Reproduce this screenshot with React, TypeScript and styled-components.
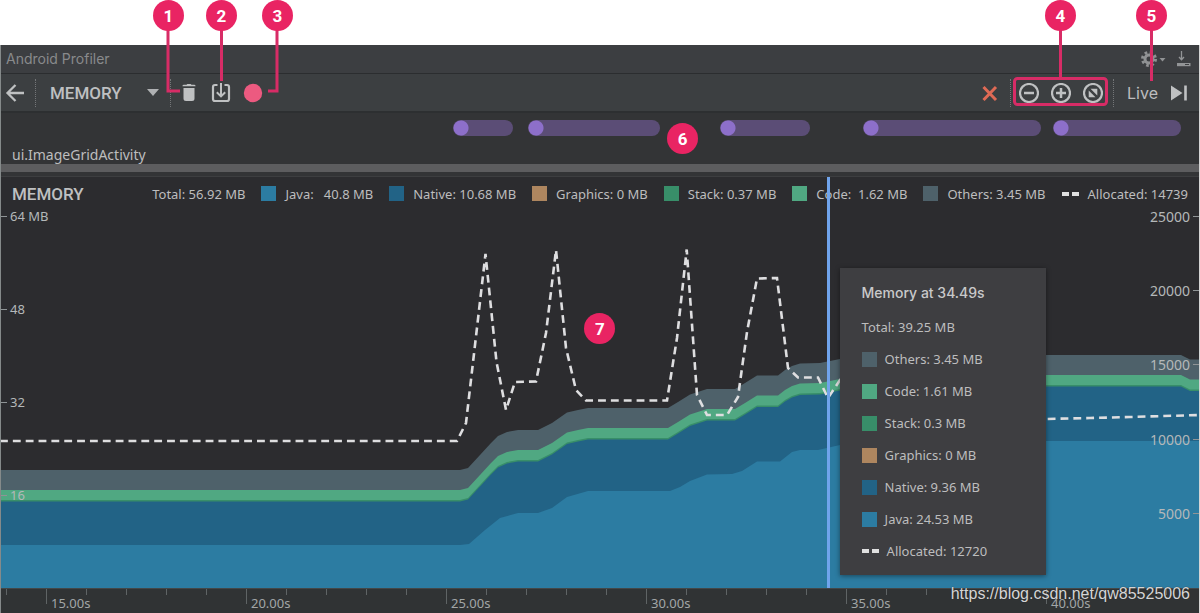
import React from "react";
import styled, { createGlobalStyle } from "styled-components";

const color = {
  java: "#2c7ca2",
  native: "#226386",
  graphics: "#ae865f",
  stack: "#388e69",
  code: "#50a882",
  others: "#4e616a",
  accent: "#e92463",
  connector: "#d72c66",
  text: "#bdbdbe",
  icon: "#bfc1c2",
};

const sans = `"Noto Sans", "Open Sans", sans-serif`;
const ui = `Inter, Roboto, sans-serif`;

const GlobalStyle = createGlobalStyle`
  * { box-sizing: border-box; }
  body { margin: 0; background: #fff; }
  button, select { font: inherit; color: inherit; border: 0; padding: 0; background: none; cursor: pointer; }
  ul { list-style: none; margin: 0; padding: 0; }
  h1, h2, h3, p { margin: 0; font-weight: inherit; }
`;

const Page = styled.div`
  position: relative;
  min-height: 100vh;
  display: flex;
  flex-direction: column;
  padding-top: 45px;
  overflow: hidden;
  font-family: ${sans};
  font-size: 13px;
  color: ${color.text};
`;

const Panel = styled.main`
  flex: 1;
  display: flex;
  flex-direction: column;
  background: #333436;
  border-left: 1px solid #858a8a;
  border-right: 1px solid #d5d5d5;
`;

const TitleBar = styled.header`
  display: flex;
  align-items: center;
  justify-content: space-between;
  height: 29px;
  padding: 0 8px 0 5px;
  background: #3c3e41;
  border-bottom: 1px solid #2b2d2f;
`;

const Title = styled.h1`
  font: 400 14px/20px ${ui};
  color: #898a8c;
`;

const TitleTools = styled.div`
  display: flex;
  align-items: center;
  gap: 11px;
`;

const Toolbar = styled.div`
  display: flex;
  align-items: center;
  justify-content: space-between;
  height: 39px;
  padding: 0 10px 0 4px;
  background: #3c3f41;
  border-bottom: 2px solid #2d2f31;
`;

const ToolGroup = styled.div`
  display: flex;
  align-items: center;
`;

const ButtonRow = styled.div`
  display: flex;
  gap: 12px;
`;

const ToolButton = styled.button`
  display: flex;
  align-items: center;
  height: 20px;
`;

const Separator = styled.i<{ $after: number }>`
  height: 28px;
  border-left: 1px dotted #747678;
  margin: 0 ${(p) => p.$after}px 0 10px;
`;

const SelectBox = styled.label`
  display: grid;
  align-items: center;
  width: 110px;
  > * { grid-area: 1 / 1; }
  > svg { justify-self: end; pointer-events: none; }
`;

const Select = styled.select`
  appearance: none;
  width: 100%;
  font: 500 17px/24px Roboto, sans-serif;
  color: #bfc0c1;
  outline: none;
`;

const LiveButton = styled.button`
  display: flex;
  align-items: center;
  gap: 11px;
  font: 400 16px/20px ${ui};
`;

const Events = styled.section`
  height: 59px;
  padding-top: 7px;
  border-bottom: 8px solid #5d5d5f;
  display: flex;
  flex-direction: column;
  justify-content: space-between;
`;

const EventTrack = styled.div`
  display: grid;
  grid-template-columns: 452fr 60fr 15fr 132fr 60fr 90fr 53fr 178fr 12fr 128fr 18fr;
`;

const EventBar = styled.span<{ $column: number }>`
  grid-column: ${(p) => p.$column};
  grid-row: 1;
  height: 16px;
  border-radius: 8px;
  background: radial-gradient(circle at 8px 8px, #8d6fca 7px, #5b4d76 8px);
`;

const Activity = styled.p`
  padding-left: 11px;
  font-size: 14px;
  line-height: 18px;
`;

const Memory = styled.section`
  position: relative;
  flex: 1;
  display: flex;
  flex-direction: column;
  margin-top: 4px;
  border-top: 1px solid #3d3e40;
  background: #2c2c2f;
`;

const MemoryHeader = styled.div`
  display: flex;
  align-items: center;
  justify-content: space-between;
  height: 39px;
  padding: 0 11px 6px 11px;
`;

const MemoryTitle = styled.h2`
  font: 500 17px/24px Roboto, sans-serif;
  color: #bfc0c1;
`;

const Legend = styled.ul`
  display: flex;
  gap: 16px;
`;

const LegendItem = styled.li`
  display: flex;
  align-items: center;
  gap: 9px;
  line-height: 20px;
  white-space: pre;
`;

const Swatch = styled.i<{ $color: string }>`
  width: 15px;
  height: 15px;
  background: ${(p) => p.$color};
`;

const DashSwatch = styled.i`
  width: 17px;
  height: 4px;
  background: linear-gradient(90deg, #e0e0e0 7px, transparent 7px, transparent 10px, #e0e0e0 10px);
`;

const Plot = styled.div`
  position: relative;
  flex: 1;
  min-height: 372px;
  display: grid;
`;

const Graph = styled.svg`
  display: block;
  position: absolute;
  inset: 0;
  width: 100%;
  height: 100%;
`;

const Scale = styled.ul<{ $rows: number; $right?: boolean }>`
  position: absolute;
  top: 0;
  bottom: 0;
  ${(p) => (p.$right ? "right: 0;" : "left: 0;")}
  display: grid;
  grid-template-rows: repeat(${(p) => p.$rows}, 1fr);
`;

const Mark = styled.li<{ $right?: boolean }>`
  display: flex;
  align-items: center;
  flex-direction: ${(p) => (p.$right ? "row-reverse" : "row")};
  gap: 3px;
  height: 0;
  font-size: ${(p) => (p.$right ? 14 : 13)}px;
  color: #b4b8b9;
  &::before {
    content: "";
    width: 6px;
    height: 1px;
    background: #8f9496;
  }
`;

const Cursor = styled.div`
  position: absolute;
  left: 69%;
  top: 0;
  bottom: 0;
  width: 3px;
  margin-left: -1px;
  background: #70a4ec;
`;

const Tooltip = styled.div`
  position: absolute;
  left: 70%;
  top: 91px;
  width: 206px;
  padding: 9px 22px 8px;
  background: #3e3e41;
  box-shadow: 0 1px 5px rgba(0, 0, 0, 0.45);
`;

const TooltipTitle = styled.h3`
  margin-bottom: 2px;
  font: 500 14px/32px ${ui};
  color: #c9c9ca;
`;

const TooltipRow = styled.li`
  display: flex;
  align-items: center;
  gap: 8px;
  height: 32px;
`;

const TimeAxis = styled.footer`
  position: relative;
  display: grid;
  grid-template-columns: 46fr 200fr 200fr 200fr 200fr 200fr 152fr;
  height: 25px;
  background: #303334;
  border-top: 1px solid #434748;
`;

const TimeLabel = styled.span<{ $column: number }>`
  grid-column: ${(p) => p.$column};
  padding: 5px 0 0 4px;
  line-height: 18px;
  color: #a2a6a7;
`;

const Badge = styled.span`
  position: absolute;
  display: grid;
  place-items: center;
  width: 31px;
  height: 31px;
  border-radius: 50%;
  background: ${color.accent};
  color: #fff;
  font: 700 17px/20px Roboto, sans-serif;
  z-index: 2;
`;

const LeftBadge = styled(Badge)<{ $x: number }>`
  top: 0;
  left: ${(p) => p.$x}px;
`;

const RightBadge = styled(Badge)<{ $x: number }>`
  top: 0;
  right: ${(p) => p.$x}px;
`;

const EventsBadge = styled(Badge)`
  top: 123px;
  left: 55.6%;
`;

const GraphBadge = styled(Badge)`
  top: 313px;
  left: 48.7%;
`;

const Connectors = styled.svg<{ $right?: boolean }>`
  position: absolute;
  top: 0;
  ${(p) => (p.$right ? "right: 0;" : "left: 0;")}
  pointer-events: none;
  z-index: 1;
`;

const Watermark = styled.a`
  position: absolute;
  right: 10px;
  bottom: 9px;
  font: 400 16px/20px "Liberation Sans", Arial, sans-serif;
  color: #d4d5d6;
  text-decoration: none;
  text-shadow: 0 0 1px #222;
`;

type Point = [number, number];

const othersTop: Point[] = [
  [0, 470], [460, 470], [468, 468], [480, 455], [491, 443], [498, 436], [507, 432], [518, 430],
  [538, 430], [552, 423], [567, 412.5], [578, 410], [588, 408], [668, 408], [678, 402], [690, 394.5],
  [707, 389], [735, 389], [745, 383], [757, 375.5], [778, 375.5], [785, 370], [792, 366],
  [800, 363.5], [820, 363], [840, 359], [860, 355], [1181, 355], [1190, 359.5], [1200, 359.5],
];

const javaTop: Point[] = [
  [0, 545], [460, 545], [469, 544], [485, 530], [500, 518], [518, 513], [538, 513], [552, 508],
  [567, 497], [588, 491], [670, 491], [680, 487], [690, 481], [707, 474.5], [732, 474], [742, 471],
  [757, 461.5], [780, 461.5], [792, 452], [800, 450], [818, 450], [840, 445], [860, 441], [1200, 441],
];

const allocated: Point[] = [
  [0, 441], [457, 441], [466, 423], [485.5, 254], [496.5, 362], [506, 410], [515, 382], [536, 381.5],
  [546, 333], [556, 250], [566, 348], [576, 390], [586, 400.5], [667, 400.5], [677, 338],
  [686.7, 249.5], [697, 395], [707, 415], [727, 415], [738, 397], [747, 332], [757, 278.5],
  [777, 278], [788, 368], [798, 377.5], [818, 377.5], [828, 398], [840, 380], [1046, 419],
  [1090, 418], [1130, 417], [1200, 415],
];

const line = (points: Point[], shift = 0) => points.map(([x, y]) => `${x},${y + shift}`).join(" ");
const area = (points: Point[], shift = 0) => `0,588 ${line(points, shift)} 1200,588`;

const minorTicks = Array.from({ length: 30 }, (_, i) => 7 + i * 40);

const legend = [
  { label: "Java:   40.8 MB", color: color.java },
  { label: "Native: 10.68 MB", color: color.native },
  { label: "Graphics: 0 MB", color: color.graphics },
  { label: "Stack: 0.37 MB", color: color.stack },
  { label: "Code:  1.62 MB", color: color.code },
  { label: "Others: 3.45 MB", color: color.others },
];

const snapshot = [
  { label: "Others: 3.45 MB", color: color.others },
  { label: "Code: 1.61 MB", color: color.code },
  { label: "Stack: 0.3 MB", color: color.stack },
  { label: "Graphics: 0 MB", color: color.graphics },
  { label: "Native: 9.36 MB", color: color.native },
  { label: "Java: 24.53 MB", color: color.java },
];

const Icon = ({ size = 20, children }: { size?: number; children: React.ReactNode }) => (
  <svg width={size} height={size} viewBox={`0 0 ${size} ${size}`} fill="none" stroke={color.icon} strokeWidth="2" aria-hidden="true">
    {children}
  </svg>
);

const ZoomRing = ({ children }: { children?: React.ReactNode }) => (
  <Icon>
    <circle cx="10" cy="10" r="9" strokeWidth="2.200" />
    {children}
  </Icon>
);

export default function App() {
  return (
    <Page>
      <GlobalStyle />
      <Panel>
        <TitleBar>
          <Title>Android Profiler</Title>
          <TitleTools>
            <ToolButton aria-label="Settings">
              <svg width="25" height="16" viewBox="0 0 25 16" aria-hidden="true">
                <circle cx="8" cy="8" r="4" fill="none" stroke="#909294" strokeWidth="3" />
                <circle cx="8" cy="8" r="6.5" fill="none" stroke="#909294" strokeWidth="3" strokeDasharray="2.6 2.5" />
                <path d="M18.500 7h6l-3 3.500z" fill="#909294" />
              </svg>
            </ToolButton>
            <ToolButton aria-label="Hide panel">
              <svg width="14" height="16" viewBox="0 0 14 16" fill="none" stroke="#929496" aria-hidden="true">
                <path d="M4.500 0v8M2 6l2.500 2.700L7 6" strokeWidth="1.300" />
                <path d="M0 12v3.200h13.500V12z" fill="#929496" stroke="none" />
                <path d="M8 13.500h4" stroke="#3c3e41" />
              </svg>
            </ToolButton>
          </TitleTools>
        </TitleBar>

        <Toolbar>
          <ToolGroup>
            <ToolButton aria-label="Back">
              <Icon><path d="M19 10H3M10.500 2L2.500 10l8 8" strokeWidth="2.300" /></Icon>
            </ToolButton>
            <Separator $after={14} />
            <SelectBox>
              <Select aria-label="Profiler" defaultValue="memory">
                <option value="memory">MEMORY</option>
              </Select>
              <svg width="13" height="7" viewBox="0 0 13 7" aria-hidden="true">
                <path d="M0 0h12l-6 7z" fill="#afb1b3" />
              </svg>
            </SelectBox>
            <Separator $after={8} />
            <ButtonRow>
              <ToolButton aria-label="Force garbage collection">
                <Icon>
                  <path d="M3.500 3.300V2.500l1-.8h3L8.300 1h3.400l.8.700h3l1 .8v.8zM4.500 5h11v10.500q0 2.500-2.500 2.500H7q-2.500 0-2.500-2.500z" fill={color.icon} stroke="none" />
                </Icon>
              </ToolButton>
              <ToolButton aria-label="Dump heap">
                <Icon>
                  <path d="M6.500 2H4Q2 2 2 4v12q0 2 2 2h12q2 0 2-2V4q0-2-2-2h-2.500" strokeWidth="2.200" />
                  <path d="M10 0v13M5.800 9.200L10 13.400l4.200-4.200" />
                </Icon>
              </ToolButton>
              <ToolButton aria-label="Record memory allocations">
                <Icon><circle cx="10" cy="10" r="9.200" fill="#ec5a80" stroke="none" /></Icon>
              </ToolButton>
            </ButtonRow>
          </ToolGroup>

          <ToolGroup>
            <ToolButton aria-label="End session">
              <Icon><path d="M3.500 4l12.500 13M16 4L3.500 17" stroke="#df6a55" strokeWidth="3" /></Icon>
            </ToolButton>
            <Separator $after={8} />
            <ButtonRow>
              <ToolButton aria-label="Zoom out"><ZoomRing><path d="M5 10h10" strokeWidth="2.500" /></ZoomRing></ToolButton>
              <ToolButton aria-label="Zoom in"><ZoomRing><path d="M5 10h10M10 5v10" strokeWidth="2.500" /></ZoomRing></ToolButton>
              <ToolButton aria-label="Reset zoom">
                <ZoomRing>
                  <path d="M7.500 5.700h6.800v6.800zM5.700 7.500v6.800h6.800z" fill={color.icon} stroke="none" />
                </ZoomRing>
              </ToolButton>
            </ButtonRow>
            <Separator $after={13} />
            <LiveButton>
              Live
              <Icon><path d="M2 2.500v15L13.500 10z" fill={color.icon} stroke="none" /><path d="M16.500 2.500v15" strokeWidth="2.600" /></Icon>
            </LiveButton>
          </ToolGroup>
        </Toolbar>

        <Events>
          <EventTrack>
            {[2, 4, 6, 8, 10].map((column) => (
              <EventBar key={column} $column={column} />
            ))}
          </EventTrack>
          <Activity>ui.ImageGridActivity</Activity>
        </Events>

        <Memory>
          <MemoryHeader>
            <MemoryTitle>MEMORY</MemoryTitle>
            <Legend>
              <LegendItem>Total: 56.92 MB</LegendItem>
              {legend.map((item) => (
                <LegendItem key={item.label}>
                  <Swatch $color={item.color} />
                  {item.label}
                </LegendItem>
              ))}
              <LegendItem>
                <DashSwatch />
                Allocated: 14739
              </LegendItem>
            </Legend>
          </MemoryHeader>

          <Plot>
            <Graph viewBox="1 216 1198 372" preserveAspectRatio="none" role="img" aria-label="Memory use over time">
              <polygon points={area(othersTop)} fill={color.others} />
              <polygon points={area(othersTop, 20)} fill={color.code} />
              <polygon points={area(othersTop, 30)} fill={color.stack} />
              <polygon points={area(othersTop, 31.5)} fill={color.native} />
              <polygon points={area(javaTop)} fill={color.java} />
              <polyline
                points={line(allocated)}
                fill="none"
                stroke="#dedee0"
                strokeWidth="2.600"
                strokeDasharray="7.850 5"
                vectorEffect="non-scaling-stroke"
              />
            </Graph>
            <Scale $rows={4}>
              {["64 MB", "48", "32", "16"].map((value) => (
                <Mark key={value}>{value}</Mark>
              ))}
            </Scale>
            <Scale $rows={5} $right>
              {["25000", "20000", "15000", "10000", "5000"].map((value) => (
                <Mark key={value} $right>{value}</Mark>
              ))}
            </Scale>
          </Plot>

          <Cursor />
          <Tooltip role="tooltip">
            <TooltipTitle>Memory at 34.49s</TooltipTitle>
            <ul>
              <TooltipRow>Total: 39.25 MB</TooltipRow>
              {snapshot.map((item) => (
                <TooltipRow key={item.label}>
                  <Swatch $color={item.color} />
                  {item.label}
                </TooltipRow>
              ))}
              <TooltipRow>
                <DashSwatch />
                Allocated: 12720
              </TooltipRow>
            </ul>
          </Tooltip>
        </Memory>

        <TimeAxis>
          <Graph viewBox="1 0 1198 24" preserveAspectRatio="none" stroke="#5f6465" aria-hidden="true">
            {minorTicks.map((x, i) => (
              <path key={x} d={`M${x - 0.5} 0v${i % 5 === 1 ? 15 : 6}`} vectorEffect="non-scaling-stroke" />
            ))}
          </Graph>
          {["15.00s", "20.00s", "25.00s", "30.00s", "35.00s", "40.00s"].map((time, i) => (
            <TimeLabel key={time} $column={i + 2}>{time}</TimeLabel>
          ))}
        </TimeAxis>
      </Panel>

      <Connectors width="300" height="110" fill="none" stroke={color.connector} strokeWidth="3" aria-hidden="true">
        <path d="M168 20v71h12M221.500 20v61M277 20v71h-9" />
      </Connectors>
      <Connectors $right width="200" height="110" fill="none" stroke={color.connector} strokeWidth="3" aria-hidden="true">
        <path d="M60.500 20v58M151.500 20v61" />
        <rect x="14.500" y="78.500" width="92" height="26" rx="3" />
      </Connectors>
      <LeftBadge $x={153}>1</LeftBadge>
      <LeftBadge $x={206}>2</LeftBadge>
      <LeftBadge $x={262}>3</LeftBadge>
      <RightBadge $x={124}>4</RightBadge>
      <RightBadge $x={33}>5</RightBadge>
      <EventsBadge>6</EventsBadge>
      <GraphBadge>7</GraphBadge>

      <Watermark href="https://blog.csdn.net/qw85525006">https://blog.csdn.net/qw85525006</Watermark>
    </Page>
  );
}
